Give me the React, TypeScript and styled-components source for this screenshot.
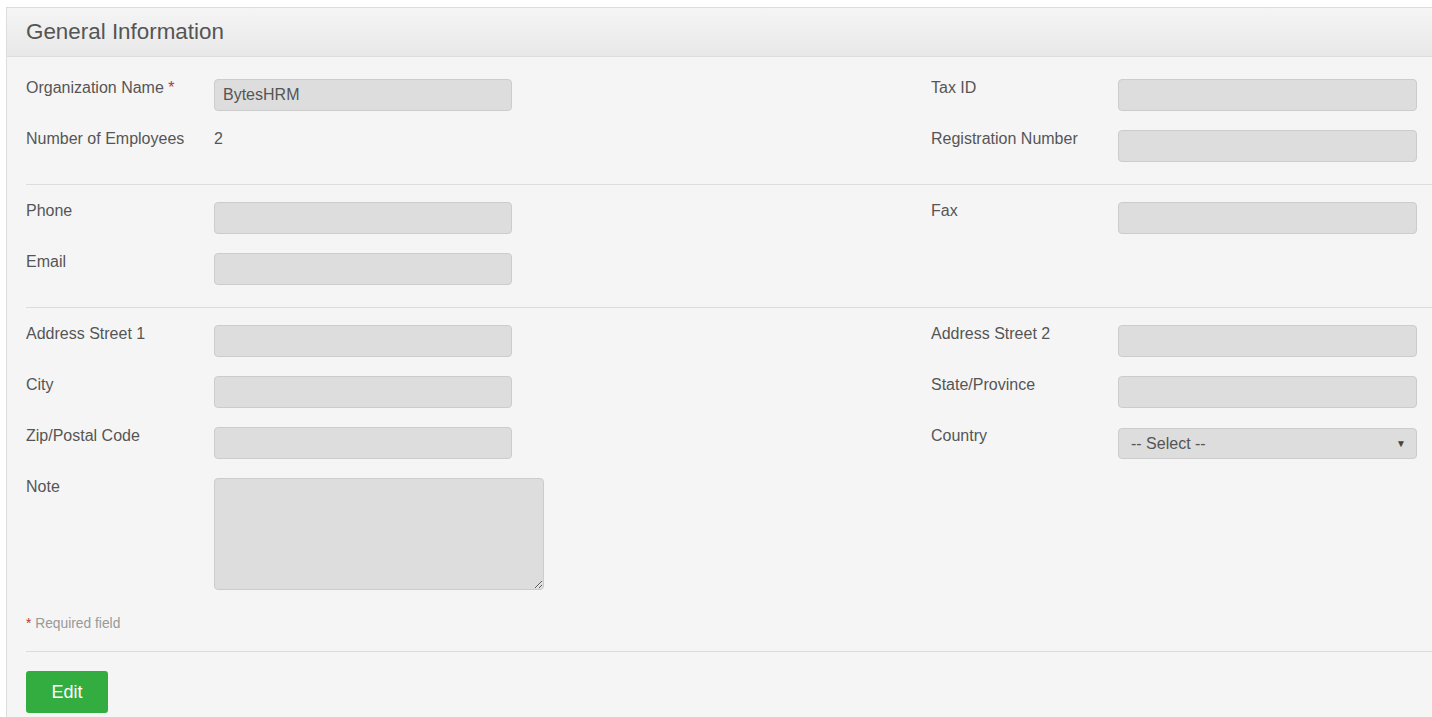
import React from "react";
import styled, { createGlobalStyle } from "styled-components";

const GlobalStyle = createGlobalStyle`
  html, body {
    margin: 0;
    padding: 0;
    background: #ffffff;
    overflow: hidden;
  }
  body {
    font-family: "Liberation Sans", Arial, sans-serif;
    color: #555555;
  }
`;

const Page = styled.div`
  padding: 7px 0 0 6px;
`;

const Panel = styled.div`
  width: 1460px;
  background: #f5f5f5;
  border: 1px solid #dddddd;
  border-right: none;
  border-bottom: none;
`;

const PanelHeader = styled.div`
  height: 49px;
  box-sizing: border-box;
  padding: 0 19px;
  display: flex;
  align-items: center;
  background: linear-gradient(to bottom, #f5f5f5, #e8e8e8);
  border-bottom: 1px solid #dddddd;
`;

const Title = styled.h2`
  margin: 0;
  font-size: 22.4px;
  font-weight: normal;
  color: #555555;
`;

const PanelBody = styled.div`
  padding: 22px 0 4px 19px;
`;

const Section = styled.div<{ $last?: boolean }>`
  display: grid;
  grid-template-columns: 486px 486px;
  column-gap: 419px;
  row-gap: 19px;
  align-items: start;
  padding: ${(p) => (p.$last ? "0" : "0 0 22px")};
`;

const Divider = styled.hr<{ $flush?: boolean }>`
  margin: ${(p) => (p.$flush ? "0" : "0 0 17px")};
  border: none;
  border-top: 1px solid #dddddd;
`;

const Field = styled.div<{ $right?: boolean; $col?: number }>`
  display: grid;
  grid-template-columns: ${(p) => (p.$right ? "187px 299px" : "188px 298px")};
  grid-column: ${(p) => p.$col ?? "auto"};
  align-items: start;
`;

const Label = styled.label`
  font-size: 16px;
  line-height: 18px;
  color: #555555;
`;

const Required = styled.span`
  color: #b03a2e;
`;

const Value = styled.div`
  font-size: 16px;
  line-height: 18px;
`;

const Input = styled.input`
  box-sizing: border-box;
  width: 100%;
  height: 32px;
  margin: 0;
  padding: 0 8px;
  font-family: inherit;
  font-size: 16px;
  color: #555555;
  background: #dddddd;
  border: 1px solid #cccccc;
  border-radius: 4px;
  outline: none;
`;

const TextArea = styled.textarea`
  box-sizing: border-box;
  width: 330px;
  height: 112px;
  margin: 0;
  padding: 6px 8px;
  font-family: inherit;
  font-size: 16px;
  color: #555555;
  background: #dddddd;
  border: 1px solid #cccccc;
  border-radius: 4px;
  outline: none;
  display: block;
`;

const Select = styled.div`
  box-sizing: border-box;
  width: 100%;
  height: 31px;
  margin-top: 1px;
  padding: 0 10px 0 12px;
  display: flex;
  align-items: center;
  justify-content: space-between;
  font-size: 16px;
  color: #555555;
  background: #dddddd;
  border: 1px solid #cccccc;
  border-radius: 4px;
`;

const Caret = styled.span`
  font-size: 10px;
  color: #444444;
`;

const Note = styled.div`
  font-size: 13.8px;
  line-height: 15px;
  color: #999999;
  padding: 26px 0 20px;
`;

const Actions = styled.div`
  padding-top: 19px;
`;

const EditButton = styled.button`
  width: 82px;
  height: 42px;
  background: #33ad40;
  border: none;
  border-radius: 3px;
  color: #ffffff;
  font-family: inherit;
  font-size: 18px;
  cursor: pointer;
`;

const App: React.FC = () => {
  return (
    <>
      <GlobalStyle />
      <Page>
        <Panel>
          <PanelHeader>
            <Title>General Information</Title>
          </PanelHeader>
          <PanelBody>
            <Section>
              <Field>
                <Label>
                  Organization Name <Required>*</Required>
                </Label>
                <Input defaultValue="BytesHRM" />
              </Field>
              <Field $right>
                <Label>Tax ID</Label>
                <Input />
              </Field>
              <Field>
                <Label>Number of Employees</Label>
                <Value>2</Value>
              </Field>
              <Field $right>
                <Label>Registration Number</Label>
                <Input />
              </Field>
            </Section>
            <Divider />
            <Section>
              <Field>
                <Label>Phone</Label>
                <Input />
              </Field>
              <Field $right>
                <Label>Fax</Label>
                <Input />
              </Field>
              <Field>
                <Label>Email</Label>
                <Input />
              </Field>
            </Section>
            <Divider />
            <Section $last>
              <Field>
                <Label>Address Street 1</Label>
                <Input />
              </Field>
              <Field $right>
                <Label>Address Street 2</Label>
                <Input />
              </Field>
              <Field>
                <Label>City</Label>
                <Input />
              </Field>
              <Field $right>
                <Label>State/Province</Label>
                <Input />
              </Field>
              <Field>
                <Label>Zip/Postal Code</Label>
                <Input />
              </Field>
              <Field $right>
                <Label>Country</Label>
                <Select>
                  <span>-- Select --</span>
                  <Caret>▼</Caret>
                </Select>
              </Field>
              <Field $col={1}>
                <Label>Note</Label>
                <TextArea />
              </Field>
            </Section>
            <Note>
              <Required>*</Required> Required field
            </Note>
            <Divider $flush />
            <Actions>
              <EditButton>Edit</EditButton>
            </Actions>
          </PanelBody>
        </Panel>
      </Page>
    </>
  );
};

export default App;
